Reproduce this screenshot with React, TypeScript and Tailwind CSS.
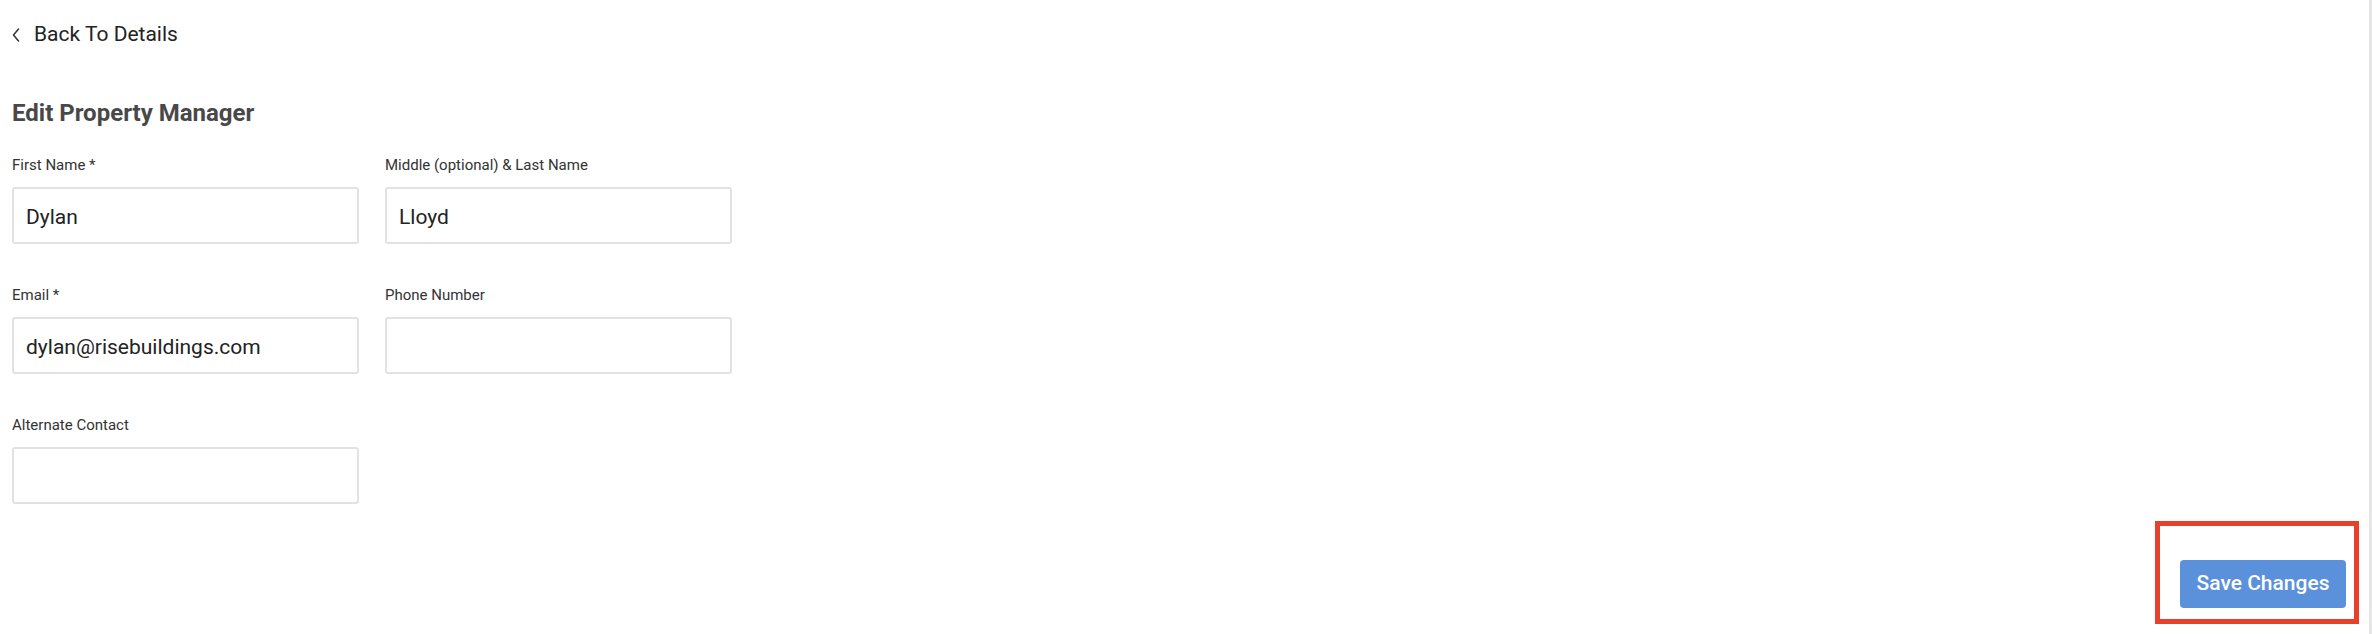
import React from "react";

function Field({ label, value }: { label: string; value?: string }) {
  return (
    <div className="flex flex-col w-[347px]">
      <label className="text-[15px] leading-[21px] text-[#333333]">{label}</label>
      <input
        readOnly
        defaultValue={value ?? ""}
        className="mt-[11px] h-[57px] w-[347px] rounded-[3px] border-2 border-[#e2e2e2] bg-white pl-[12px] pt-[2px] text-[21px] text-[#222222] outline-none"
      />
    </div>
  );
}

export default function App() {
  return (
    <div className="flex h-[634px] w-full bg-white font-['Roboto',sans-serif]">
      <div className="flex flex-1 flex-col pl-[12px] pt-[20px]">
        <div className="flex h-[30px] items-center gap-[14px] text-[21px] text-[#222222]">
          <svg width="8" height="14" viewBox="0 0 8 14" fill="none">
            <path d="M6.5 1 L1.5 7 L6.5 13" stroke="#333333" strokeWidth="1.5" strokeLinecap="round" strokeLinejoin="round" />
          </svg>
          <span>Back To Details</span>
        </div>
        <h1 className="mt-[47px] text-[24px] leading-[32px] font-bold text-[#484848]">Edit Property Manager</h1>
        <div className="mt-[26px] grid grid-cols-[347px_347px] gap-x-[26px] gap-y-[41px]">
          <Field label="First Name *" value="Dylan" />
          <Field label="Middle (optional) & Last Name" value="Lloyd" />
          <Field label="Email *" value="dylan@risebuildings.com" />
          <Field label="Phone Number" />
          <Field label="Alternate Contact" />
        </div>
        <div className="mt-[17px] flex justify-end pr-[10px]">
          <div className="border-[5px] border-[#e8412b] pt-[34px] pl-[20px] pr-[8px] pb-[11px]">
            <button className="h-[48px] w-[166px] rounded-[4px] bg-[#5b90db] text-[21px] font-medium text-white">
              Save Changes
            </button>
          </div>
        </div>
      </div>
      <div className="h-[634px] w-[3px] bg-[#e6e6e6]" />
    </div>
  );
}
